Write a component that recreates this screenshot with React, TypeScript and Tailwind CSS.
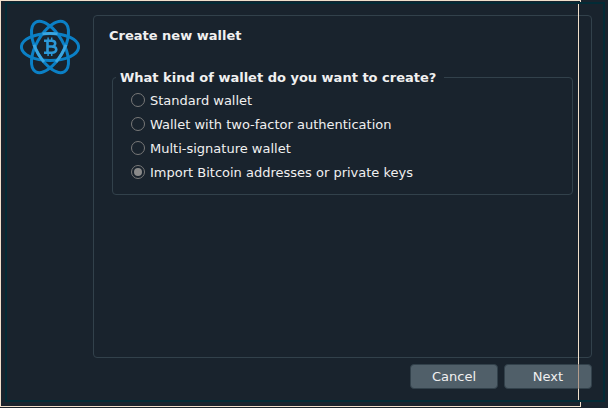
const options = [
  "Standard wallet",
  "Wallet with two-factor authentication",
  "Multi-signature wallet",
  "Import Bitcoin addresses or private keys",
];

function Logo() {
  return (
    <svg className="block h-[60px] w-[60px]" viewBox="-30 -30 60 60" fill="none">
      <g stroke="#0b80c6" strokeWidth="3">
        <ellipse rx="28.6" ry="13.6" />
        <ellipse rx="28.6" ry="13.6" transform="rotate(60)" />
        <ellipse rx="28.6" ry="13.6" transform="rotate(120)" />
      </g>
      <g stroke="#3aa5e0" strokeWidth="2.9">
        <path d="M-7.5 -13.1A28.6 13.6 0 0 1 7.5 -13.1" />
        <path d="M-10 -12.7A28.6 13.6 0 0 1 10 -12.7" transform="rotate(120)" />
        <path d="M-10 -12.7A28.6 13.6 0 0 1 10 -12.7" transform="rotate(240)" />
      </g>
      <g stroke="#2b98d8">
        <path strokeWidth="2.6" d="M-2.5 -6.3V5.7M-6 -6.3H1.6C6.4 -6.3 6.4 -0.5 1.6 -0.5H-2M1.6 -0.5C7.8 -0.5 7.8 5.7 1.8 5.7H-6" />
        <path strokeWidth="1.5" d="M-1.9 -9.5V-6M1.7 -9.5V-6M-1.9 5.5V9M1.7 5.5V9" />
      </g>
    </svg>
  );
}

function Radio({ label, checked }: { label: string; checked: boolean }) {
  return (
    <label className="flex h-6 items-center gap-[5px]">
      <span className="mb-[2px] flex h-[14px] w-[14px] items-center justify-center rounded-full border border-[#787878]">
        {checked && <span className="h-2 w-2 rounded-full bg-[#8a8a8a]" />}
      </span>
      <span>{label}</span>
    </label>
  );
}

function Button({ label }: { label: string }) {
  return (
    <button className="h-[25px] w-[88px] rounded-[4px] border border-[#32414b] bg-[#505f69] leading-none">
      {label}
    </button>
  );
}

export default function App() {
  return (
    <div className="relative h-[408px] w-[608px] overflow-hidden bg-[#19232d] font-['DejaVu_Sans',sans-serif] text-[13px] text-[#f0f0f0]">
      <div className="flex pl-5 pt-[15px]">
        <div className="w-[73px] pt-[2px]">
          <Logo />
        </div>
        <main className="h-[343px] w-[499px] rounded-[4px] border border-[#32414b] pl-[15px] pt-[12px]">
          <h1 className="h-4 font-bold leading-4">Create new wallet</h1>
          <fieldset className="ml-[3px] mt-[26px] h-[125px] w-[461px] rounded-[4px] border border-[#32414b] pl-[18px]">
            <legend className="-ml-[15px] h-[14px] pl-1 pr-[8px] font-bold leading-4">
              What kind of wallet do you want to create?
            </legend>
            <div className="pt-[5px]">
              {options.map((label, i) => (
                <Radio key={label} label={label} checked={i === 3} />
              ))}
            </div>
          </fieldset>
        </main>
      </div>
      <div className="flex justify-end gap-[6px] pr-4 pt-[6px]">
        <Button label="Cancel" />
        <Button label="Next" />
      </div>
      <div className="pointer-events-none absolute left-0 top-0 h-[407px] w-[581px] border-y border-l border-[#f0dfcb]" />
      <div className="pointer-events-none absolute left-[580px] top-0 h-[2px] w-px bg-[#f0dfcb]" />
      <div className="pointer-events-none absolute left-[580px] top-[402px] h-[5px] w-px bg-[#f0dfcb]" />
      <div className="pointer-events-none absolute left-[5px] top-[2px] h-[400px] w-[600px] border-2 border-[#032b36]" />
      <div className="pointer-events-none absolute left-[578px] top-1 h-[396px] w-px bg-[#f0dfcb]" />
      <div className="pointer-events-none absolute left-[578px] top-[364px] h-[25px] w-px bg-[#b39c8c]" />
    </div>
  );
}
